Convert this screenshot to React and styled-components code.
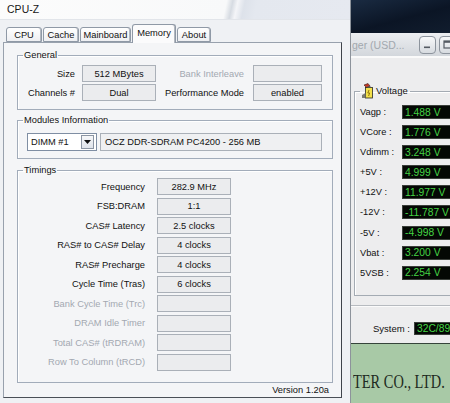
import React from "react";
import styled, { createGlobalStyle } from "styled-components";

const GlobalStyle = createGlobalStyle`
  html, body { margin: 0; padding: 0; }
  body {
    width: 450px;
    height: 403px;
    overflow: hidden;
    background: #eceef0;
    font-family: "Liberation Sans", Arial, sans-serif;
    font-size: 9.3px;
    color: #111;
  }
  * { box-sizing: border-box; }
`;

const Screen = styled.div`
  display: flex;
  width: 450px;
  height: 403px;
  overflow: hidden;
`;

/* ---------- CPU-Z window ---------- */

const CpuzWindow = styled.div`
  width: 350px;
  flex: none;
  display: flex;
  flex-direction: column;
  background: #eff1f4;
`;

const TitleBar = styled.div`
  height: 20px;
  display: flex;
  align-items: center;
  padding-left: 7px;
  font-size: 10.4px;
  letter-spacing: 0.1px;
  color: #161616;
  background: linear-gradient(
    102deg,
    #fcfcfc 0,
    #f8f9fa 222px,
    #d6dbe2 228px,
    #f4f5f8 233px,
    #dde2ea 240px,
    #e4e8ef 252px,
    #e6e9f0 100%
  );
  border-bottom: 1px solid #e2e5ea;
`;

const TabStrip = styled.div`
  height: 22px;
  display: flex;
  align-items: flex-end;
  gap: 1px;
  padding-left: 6px;
`;

const Tab = styled.div`
  position: relative;
  z-index: ${(p) => (p.$active ? 2 : 0)};
  width: ${(p) => p.$w}px;
  height: ${(p) => (p.$active ? 19 : 15)}px;
  margin-bottom: ${(p) => (p.$active ? -1 : 0)}px;
  display: flex;
  align-items: center;
  justify-content: center;
  padding-bottom: ${(p) => (p.$active ? 2 : 0)}px;
  border: 1px solid #8f99a6;
  border-bottom: ${(p) => (p.$active ? "none" : "1px solid #8f99a6")};
  border-radius: 3px 3px 0 0;
  background: ${(p) =>
    p.$active ? "#fbfbfc" : "linear-gradient(#ffffff, #eeeff2)"};
  box-shadow: inset -1px 0 #b3b8c0;
  color: #111;
`;

const TabPanel = styled.div`
  margin-left: 3px;
  width: 339px;
  height: 356px;
  display: flex;
  flex-direction: column;
  padding: 6px 0 0 13px;
  background: #f4f5f7;
  border: 1px solid #98a1ad;
  border-right-color: #3f444b;
  border-bottom-color: #4a4f56;
`;

const Group = styled.fieldset`
  margin: ${(p) => p.$top || 0}px 0 0 0;
  width: 316px;
  min-inline-size: 0;
  padding: ${(p) => p.$pad};
  border: 1px solid #a2acba;
  box-shadow: inset 1px 1px #ffffff;
`;

const Legend = styled.legend`
  padding: 0 1px;
  line-height: 12px;
  font-size: 9.3px;
  color: #111;
`;

const GeneralGrid = styled.div`
  display: grid;
  grid-template-columns: 52px 74px 83px 69px;
  grid-auto-rows: 17px;
  column-gap: 7px;
  row-gap: 2px;
  align-items: center;
`;

const Label = styled.div`
  text-align: right;
  padding-right: ${(p) => p.$pr || 0}px;
  color: ${(p) => (p.$dim ? "#a3a8b1" : "#111")};
  white-space: nowrap;
`;

const Field = styled.div`
  height: 17px;
  display: flex;
  align-items: center;
  justify-content: center;
  background: #ebecee;
  border: 1px solid #aab0b8;
  white-space: nowrap;
`;

const ModuleRow = styled.div`
  display: flex;
  gap: 3px;
  padding-left: 4px;
  height: 18px;
`;

const Combo = styled.div`
  width: 70px;
  display: flex;
  align-items: center;
  justify-content: space-between;
  padding: 1px 2px 1px 3px;
  background: #ffffff;
  border: 1px solid #7f8ea3;
`;

const ComboButton = styled.div`
  width: 13px;
  height: 14px;
  display: flex;
  align-items: center;
  justify-content: center;
  background: linear-gradient(#f6f7f9, #dfe3ea);
  border: 1px solid #8c95a3;
`;

const PartBox = styled.div`
  width: 222px;
  display: flex;
  align-items: center;
  padding-left: 4px;
  background: #eff0f2;
  border: 1px solid #aab0b8;
  white-space: nowrap;
`;

const TimingGrid = styled.div`
  display: grid;
  grid-template-columns: 122px 74px;
  grid-auto-rows: 17px;
  column-gap: 12px;
  row-gap: 2.5px;
  align-items: center;
`;

const Footer = styled.div`
  margin-top: auto;
  height: 13px;
  display: flex;
  justify-content: flex-end;
  align-items: center;
  padding: 0 12px 2px 0;
  color: #111;
`;

/* ---------- hardware monitor window ---------- */

const MonitorWindow = styled.div`
  width: 100px;
  flex: none;
  display: flex;
  flex-direction: column;
  overflow: hidden;
  background: #ededee;
  border-left: 1px solid #8d939b;
`;

const Backdrop = styled.div`
  height: 33px;
  flex: none;
  background: linear-gradient(165deg, #1a2b42 0%, #0b1525 55%, #111d2e 100%);
`;

const MonTitleBar = styled.div`
  height: 25px;
  flex: none;
  display: flex;
  align-items: center;
  gap: 3px;
  padding-left: 1px;
  background: linear-gradient(#eceef1, #d3d7dc);
  border-bottom: 2px solid #fafafa;
`;

const MonTitle = styled.div`
  font-size: 10.5px;
  color: #a2a8ae;
  white-space: nowrap;
  width: 64px;
  flex: none;
  overflow: hidden;
`;

const WinButton = styled.div`
  width: 17px;
  height: 18px;
  flex: none;
  display: flex;
  align-items: center;
  justify-content: center;
  border: 1px solid #8d949d;
  border-radius: 4px;
  background: linear-gradient(#f7f8f9, #d7dbe0);
`;

const VoltGroup = styled.fieldset`
  margin: 25px 0 0 3px;
  width: 130px;
  min-inline-size: 0;
  padding: 6px 0 15px 5px;
  border: 1px solid #a4abb3;
  box-shadow: inset 1px 1px #ffffff;
`;

const VoltLegend = styled.legend`
  display: flex;
  align-items: center;
  gap: 1px;
  padding: 0 2px 0 1px;
  line-height: 16px;
  font-size: 9.5px;
`;

const VoltGrid = styled.div`
  display: grid;
  grid-template-columns: 42px 70px;
  grid-auto-rows: 14px;
  row-gap: 6.1px;
  align-items: center;
`;

const VoltLabel = styled.div`
  font-size: 9.3px;
  white-space: nowrap;
`;

const Readout = styled.div`
  height: ${(p) => p.$h || 14}px;
  width: ${(p) => (p.$w ? `${p.$w}px` : "auto")};
  flex: none;
  display: flex;
  align-items: center;
  padding-left: 2px;
  background: #040804;
  border: 1px solid #3a3f3a;
  color: #45d445;
  font-size: 10.3px;
  white-space: nowrap;
`;

const Separator = styled.div`
  margin-top: 9px;
  height: 2px;
  flex: none;
  border-top: 1px solid #b7bbc0;
  border-bottom: 1px solid #fbfbfb;
`;

const SystemRow = styled.div`
  margin-top: 15px;
  display: flex;
  align-items: center;
  gap: 4px;
  padding-left: 22px;
  font-size: 9.5px;
  white-space: nowrap;
`;

const SystemLabel = styled.span`
  flex: none;
`;

const CompanyBand = styled.div`
  margin-top: 8px;
  flex: 1;
  padding: 28px 0 0 2px;
  background: #a8c9a6;
  border-top: 1px solid #35443a;
  white-space: nowrap;
`;

const Company = styled.span`
  display: inline-block;
  font-family: "Liberation Serif", "Times New Roman", serif;
  font-size: 18px;
  line-height: 20px;
  color: #1d2a21;
  transform: scaleX(0.8);
  transform-origin: left center;
`;

const tabs = [
  { name: "CPU", w: 36 },
  { name: "Cache", w: 36 },
  { name: "Mainboard", w: 51 },
  { name: "Memory", w: 44, active: true },
  { name: "About", w: 34 },
];

const timings = [
  ["Frequency", "282.9 MHz"],
  ["FSB:DRAM", "1:1"],
  ["CAS# Latency", "2.5 clocks"],
  ["RAS# to CAS# Delay", "4 clocks"],
  ["RAS# Precharge", "4 clocks"],
  ["Cycle Time (Tras)", "6 clocks"],
  ["Bank Cycle Time (Trc)", ""],
  ["DRAM Idle Timer", ""],
  ["Total CAS# (tRDRAM)", ""],
  ["Row To Column (tRCD)", ""],
];

const voltages = [
  ["Vagp :", "1.488 V"],
  ["VCore :", "1.776 V"],
  ["Vdimm :", "3.248 V"],
  ["+5V :", "4.999 V"],
  ["+12V :", "11.977 V"],
  ["-12V :", "-11.787 V"],
  ["-5V :", "-4.998 V"],
  ["Vbat :", "3.200 V"],
  ["5VSB :", "2.254 V"],
];

function VoltageIcon() {
  return (
    <svg width="14" height="16" viewBox="0 0 14 16">
      <path d="M3 2 L7 0.5 L9 3 L6 5 Z" fill="#c23a2a" stroke="#3a1a10" strokeWidth="0.6" />
      <rect x="4.5" y="4.5" width="7" height="10.5" fill="#f3e04a" stroke="#2a2a20" strokeWidth="0.8" />
      <rect x="6.5" y="3.2" width="3" height="1.6" fill="#555" />
      <path d="M1 12 L4.5 10 L4.5 15 L1 15 Z" fill="#7a7a74" />
      <path d="M8 7 L6.8 10 L8.6 10 L7.6 13" fill="none" stroke="#7a5a00" strokeWidth="0.8" />
    </svg>
  );
}

export default function App() {
  return (
    <>
      <GlobalStyle />
      <Screen>
        <CpuzWindow>
          <TitleBar>CPU-Z</TitleBar>
          <TabStrip>
            {tabs.map((t) => (
              <Tab key={t.name} $w={t.w} $active={t.active}>
                {t.name}
              </Tab>
            ))}
          </TabStrip>
          <TabPanel>
            <Group $pad="4px 0 8px 5px">
              <Legend>General</Legend>
              <GeneralGrid>
                <Label>Size</Label>
                <Field>512 MBytes</Field>
                <Label $dim $pr={2}>Bank Interleave</Label>
                <Field />
                <Label>Channels #</Label>
                <Field>Dual</Field>
                <Label $pr={2}>Performance Mode</Label>
                <Field>enabled</Field>
              </GeneralGrid>
            </Group>

            <Group $top={4} $pad="7px 0 7px 5px">
              <Legend>Modules Information</Legend>
              <ModuleRow>
                <Combo>
                  <span>DIMM #1</span>
                  <ComboButton>
                    <svg width="7" height="4" viewBox="0 0 7 4">
                      <path d="M0 0 H7 L3.5 4 Z" fill="#111" />
                    </svg>
                  </ComboButton>
                </Combo>
                <PartBox>OCZ DDR-SDRAM PC4200 - 256 MB</PartBox>
              </ModuleRow>
            </Group>

            <Group $top={5} $pad="2px 0 11px 5px">
              <Legend>Timings</Legend>
              <TimingGrid>
                {timings.map(([label, value]) => (
                  <React.Fragment key={label}>
                    <Label $dim={!value}>{label}</Label>
                    <Field>{value}</Field>
                  </React.Fragment>
                ))}
              </TimingGrid>
            </Group>

            <Footer>Version 1.20a</Footer>
          </TabPanel>
        </CpuzWindow>

        <MonitorWindow>
          <Backdrop />
          <MonTitleBar>
            <MonTitle>ger (USD...</MonTitle>
            <WinButton>
              <svg width="9" height="9" viewBox="0 0 9 9">
                <rect x="1" y="6.5" width="6" height="1.6" fill="#555b63" />
              </svg>
            </WinButton>
            <WinButton>
              <svg width="9" height="9" viewBox="0 0 9 9">
                <rect x="1" y="1" width="7" height="7" fill="none" stroke="#555b63" strokeWidth="1.2" />
                <rect x="1" y="1" width="7" height="1.8" fill="#555b63" />
              </svg>
            </WinButton>
          </MonTitleBar>

          <VoltGroup>
            <VoltLegend>
              <VoltageIcon />
              <span>Voltage</span>
            </VoltLegend>
            <VoltGrid>
              {voltages.map(([label, value]) => (
                <React.Fragment key={label}>
                  <VoltLabel>{label}</VoltLabel>
                  <Readout>{value}</Readout>
                </React.Fragment>
              ))}
            </VoltGrid>
          </VoltGroup>

          <Separator />

          <SystemRow>
            <SystemLabel>System :</SystemLabel>
            <Readout $h={13} $w={50}>32C/89F</Readout>
          </SystemRow>

          <CompanyBand>
            <Company>TER CO., LTD.</Company>
          </CompanyBand>
        </MonitorWindow>
      </Screen>
    </>
  );
}
